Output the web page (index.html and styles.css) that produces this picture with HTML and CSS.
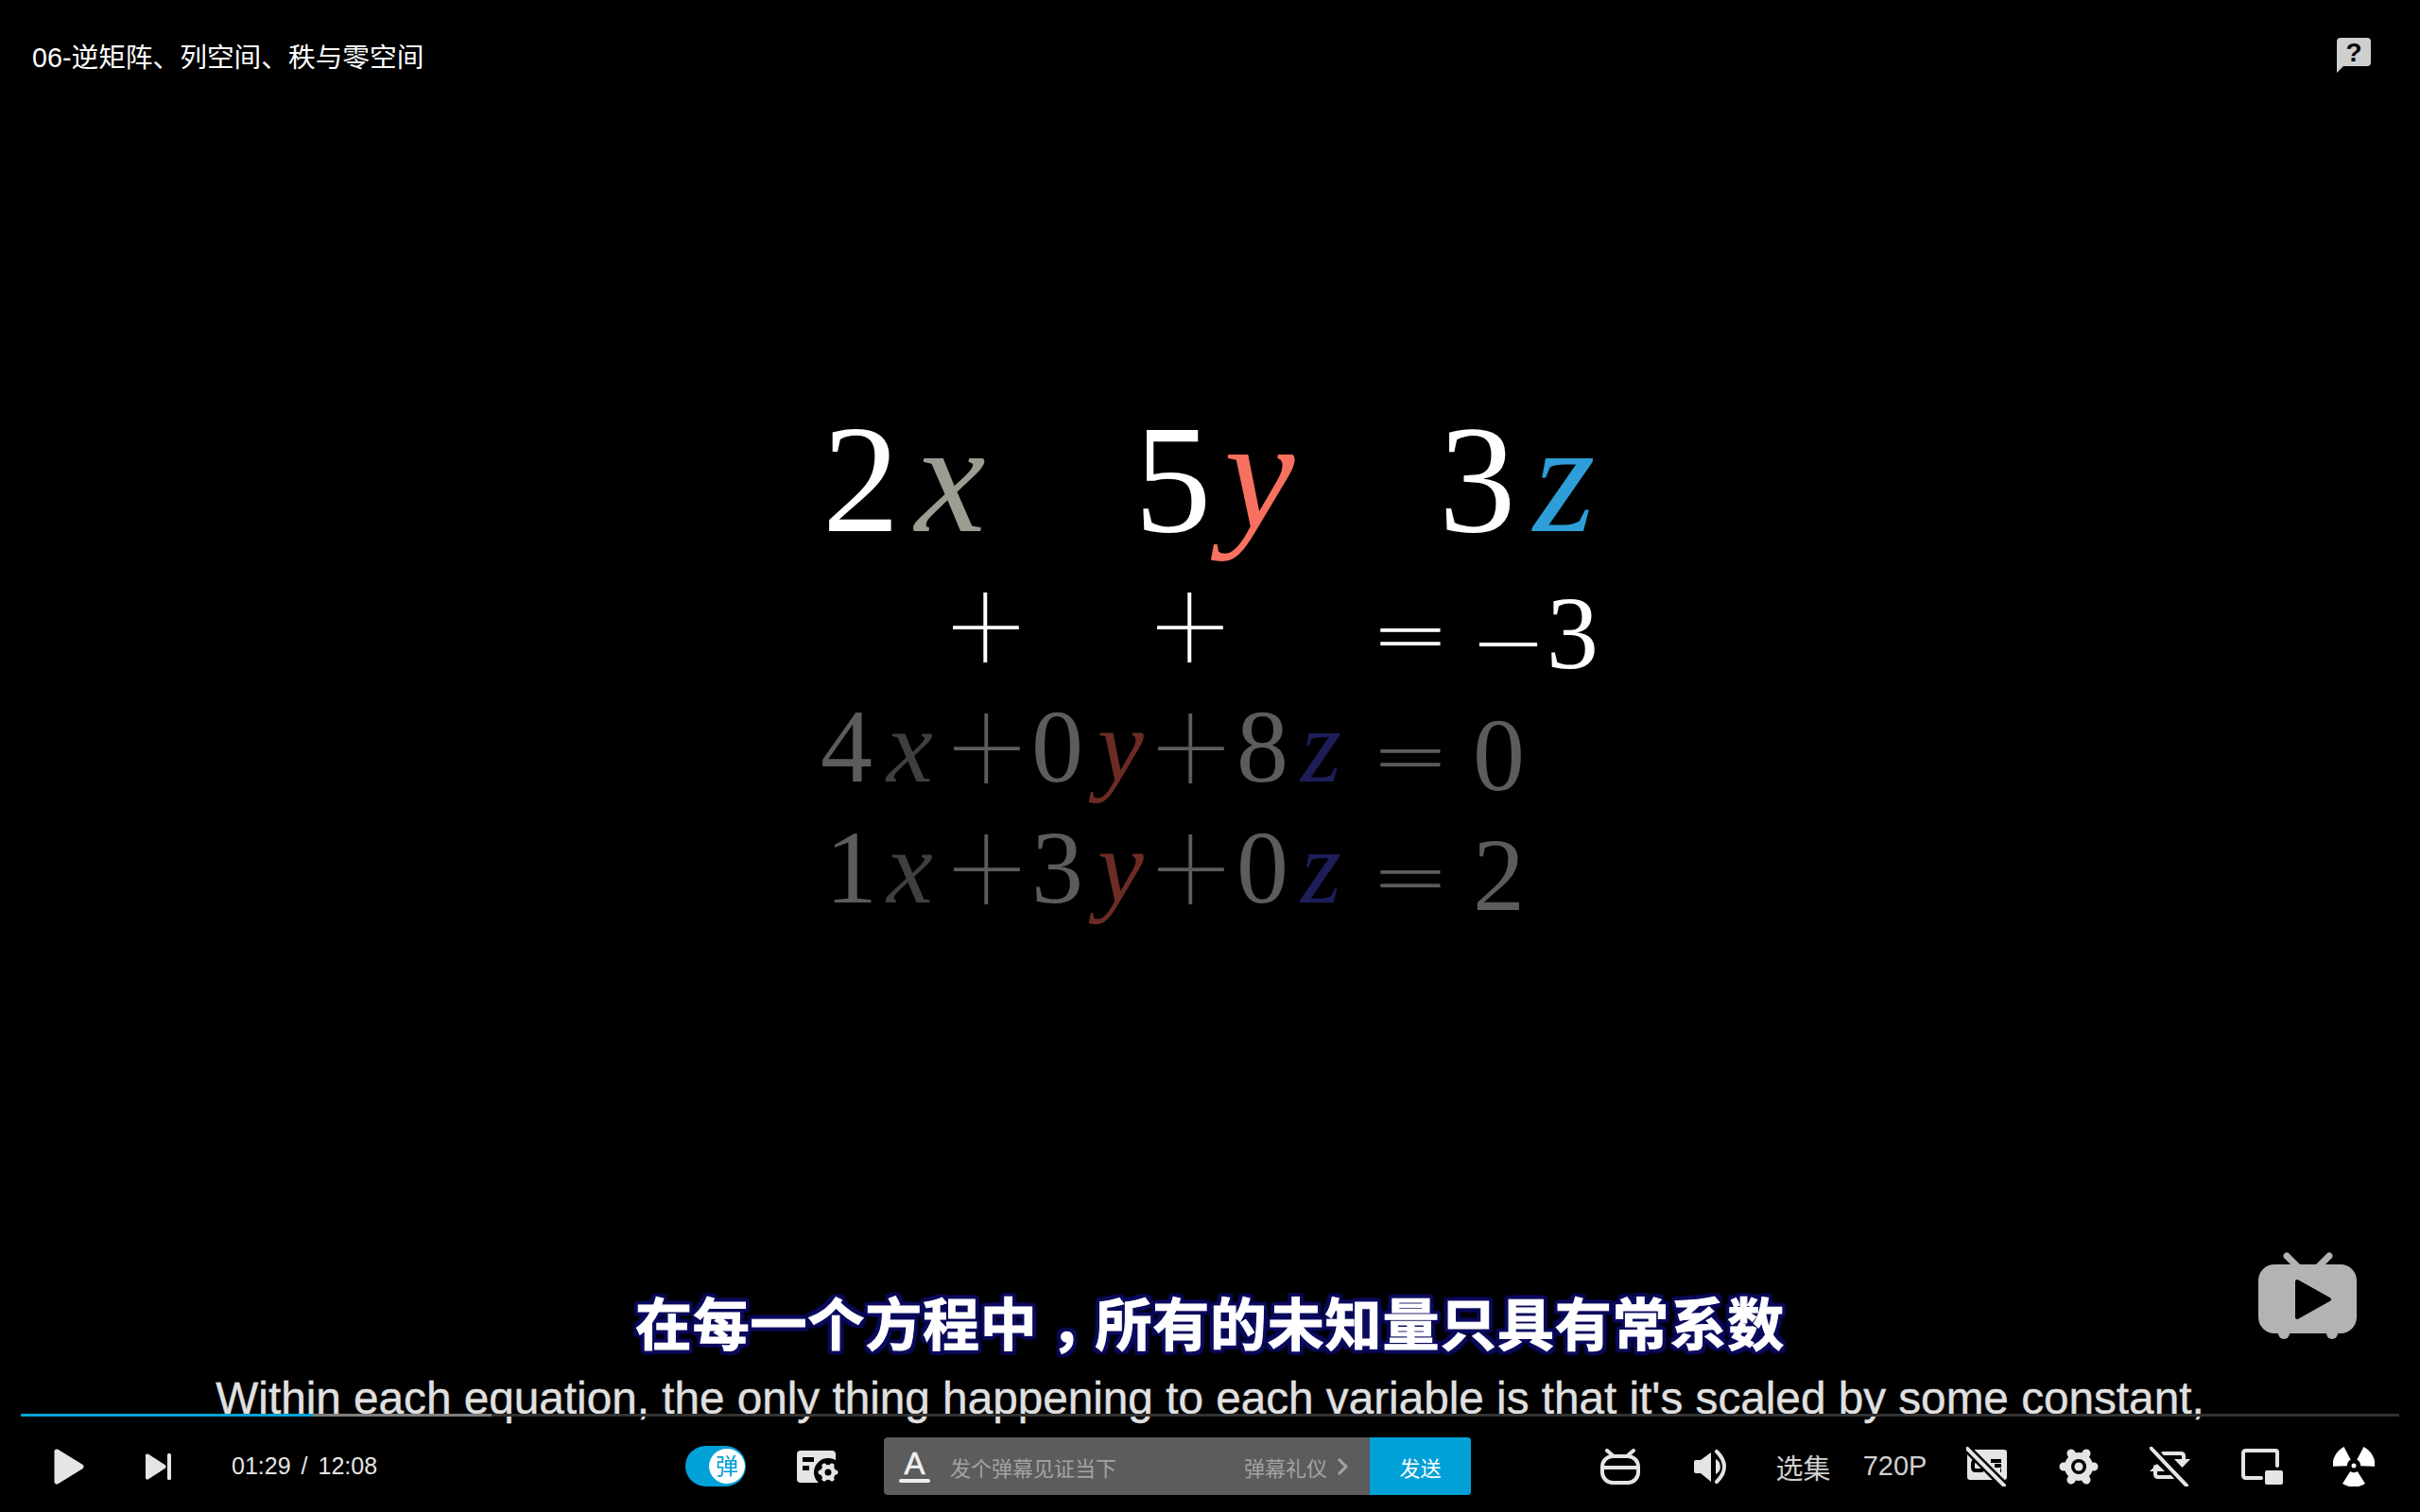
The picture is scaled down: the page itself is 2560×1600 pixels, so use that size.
FILE: index.html
```html
<!DOCTYPE html>
<html lang="zh-CN">
<head>
    <meta charset="UTF-8">
    <meta name="viewport" content="width=device-width, initial-scale=1.0">
    <title>06-逆矩阵、列空间、秩与零空间</title>
    <link rel="stylesheet" href="styles.css">
</head>
<body>
    <div class="player">
        <div class="video">
            <!-- the video frame: glyph places are the picture itself -->
            <svg class="frame" viewBox="0 0 2560 1600" width="2560" height="1600">
                <g class="row-top">
                    <text class="num" x="870" y="562">2</text>
                    <text class="var c-x" x="968" y="562">x</text>
                    <text class="num" x="1200" y="562">5</text>
                    <text class="var c-y" x="1295" y="558">y</text>
                    <text class="num" x="1522" y="562">3</text>
                    <text class="var c-z" x="1622" y="562">z</text>
                    <text class="op" x="1003" y="711">+</text>
                    <text class="op" x="1219" y="711">+</text>
                    <text class="op-eq" transform="translate(1449 698) scale(1 .47)">=</text>
                    <text class="op op-minus" x="1553" y="737">−</text>
                    <text class="num-small" x="1636" y="707">3</text>
                </g>
                <g class="row-dim">
                    <text class="num-small" x="868" y="827">4</text>
                    <text class="var-small c-x-dim" x="938" y="827">x</text>
                    <text class="op-small" x="1004" y="839">+</text>
                    <text class="num-small" x="1091" y="827">0</text>
                    <text class="var-small c-y-dim" x="1161" y="827">y</text>
                    <text class="op-small" x="1220" y="839">+</text>
                    <text class="num-small" x="1308" y="827">8</text>
                    <text class="var-small c-z-dim" x="1376" y="827">z</text>
                    <text class="op-eq-small" transform="translate(1449 826) scale(1 .47)">=</text>
                    <text class="num-small" x="1558" y="836">0</text>

                    <text class="num-small" x="873" y="955">1</text>
                    <text class="var-small c-x-dim" x="938" y="955">x</text>
                    <text class="op-small" x="1004" y="967">+</text>
                    <text class="num-small" x="1091" y="955">3</text>
                    <text class="var-small c-y-dim" x="1161" y="955">y</text>
                    <text class="op-small" x="1220" y="967">+</text>
                    <text class="num-small" x="1308" y="955">0</text>
                    <text class="var-small c-z-dim" x="1376" y="955">z</text>
                    <text class="op-eq-small" transform="translate(1449 954) scale(1 .47)">=</text>
                    <text class="num-small" x="1558" y="963">2</text>
                </g>
            </svg>

            <div class="top-bar">
                <span class="video-title">06-逆矩阵、列空间、秩与零空间</span>
                <svg class="help-icon" viewBox="0 0 36 37" width="36" height="37">
                    <path class="icon-help" d="M4 0H32Q36 0 36 4V26Q36 30 32 30H7L0 37V4Q0 0 4 0Z"/>
                    <text class="help-mark" x="18" y="25">?</text>
                </svg>
            </div>

            <svg class="tv-icon" viewBox="0 0 104 95" width="104" height="95">
                <path class="tv-antenna" d="M30 6L41 17M75 6L64 17"/>
                <circle class="tv-body" cx="27" cy="88" r="6"/>
                <circle class="tv-body" cx="78" cy="88" r="6"/>
                <rect class="tv-body" x="0" y="15" width="104" height="73" rx="17"/>
                <path class="tv-play" d="M41 33L75 52L41 71Z"/>
            </svg>

            <div class="subtitles">
                <div class="sub-zh">在每一个方程中<span class="sub-comma">，</span>所有的未知量只具有常系数</div>
                <div class="sub-en">Within each equation, the only thing happening to each variable is that it's scaled by some constant,</div>
            </div>
        </div>

        <div class="progress">
            <div class="progress-buffer" style="width: 19.8%"></div>
            <div class="progress-played" style="width: 12.28%"></div>
        </div>

        <div class="controls">
            <div class="controls-left">
                <svg viewBox="0 0 32 38" width="32" height="38">
                    <path class="icon-solid" d="M3 3L29 19L3 35Z"/>
                </svg>
                <svg viewBox="0 0 27 28" width="27" height="28">
                    <path class="icon-solid" d="M2 3L19 14L2 25Z"/>
                    <rect class="icon-fill" x="23" y="0" width="4" height="28" rx="1.5"/>
                </svg>
                <div class="time"><span>01:29</span><span>/</span><span>12:08</span></div>
            </div>

            <div class="controls-mid">
                <div class="danmaku-toggle"><span class="toggle-knob">弹</span></div>
                <svg class="danmaku-settings" viewBox="0 0 44 34" width="44" height="34">
                    <rect class="icon-fill" x="0" y="0" width="41" height="34" rx="4"/>
                    <rect class="icon-cut" x="6" y="7" width="12" height="5"/>
                    <rect class="icon-cut" x="6" y="16" width="7" height="5"/>
                    <circle class="icon-cut" cx="33" cy="23" r="15"/>
                    <g transform="translate(33 23)">
                        <path class="gear-lobe" d="M-8 0H8M-4 -7L4 7M4 -7L-4 7"/>
                        <circle class="icon-fill" r="8"/>
                        <circle class="icon-cut" r="3.5"/>
                    </g>
                </svg>
                <div class="danmaku-input">
                    <div class="font-button"><span class="font-letter">A</span><span class="font-line"></span></div>
                    <span class="danmaku-placeholder">发个弹幕见证当下</span>
                    <span class="danmaku-etiquette">弹幕礼仪</span>
                    <svg class="chevron" viewBox="0 0 12 18" width="12" height="18">
                        <path d="M2 1L10 9L2 17"/>
                    </svg>
                    <button class="send-button">发送</button>
                </div>
            </div>

            <div class="controls-right">
                <div class="ctl-item">
                    <svg viewBox="0 0 42 38" width="42" height="38">
                        <rect class="icon-line" x="2" y="8" width="38" height="28" rx="11"/>
                        <path class="icon-line" d="M2 20H40M7 2L14 8M35 2L28 8"/>
                    </svg>
                </div>
                <div class="ctl-item">
                    <svg viewBox="0 0 38 36" width="38" height="36">
                        <path class="icon-fill" d="M2 11H7L18 3V34L7 25H2Q0 25 0 23V13Q0 11 2 11Z"/>
                        <path class="icon-fill" d="M23 10A9 9 0 0 1 23 26Z"/>
                        <path class="icon-line" d="M24 2Q40 18 24 34"/>
                    </svg>
                </div>
                <div class="ctl-item ctl-text">选集</div>
                <div class="ctl-item ctl-text">720P</div>
                <div class="ctl-item">
                    <svg viewBox="0 0 44 42" width="44" height="42">
                        <rect class="icon-fill" x="1" y="3" width="42" height="32" rx="3"/>
                        <path class="icon-mark" d="M15 15H10Q7 15 7 18V22Q7 25 10 25H18M26 15H37M30 20H37M36 25H37"/>
                        <path class="slash-cut" d="M1 2L40 41"/>
                        <path class="slash" d="M1 2L40 41"/>
                    </svg>
                </div>
                <div class="ctl-item">
                    <svg viewBox="-21 -20 42 40" width="42" height="40">
                        <path class="gear-big" d="M-16 0H16M-8 -14L8 14M8 -14L-8 14"/>
                        <circle class="icon-fill" r="15"/>
                        <circle class="icon-cut" r="8"/>
                        <circle class="icon-fill" r="4.5"/>
                    </svg>
                </div>
                <div class="ctl-item">
                    <svg viewBox="0 0 44 42" width="44" height="42">
                        <path class="icon-line" d="M14 7H33Q36 7 36 10V14M6 21V29Q6 32 9 32H30"/>
                        <path class="icon-fill" d="M26 13H43L34.5 22ZM0 26H16L8 18Z"/>
                        <path class="slash-cut" d="M1 1L39 41"/>
                        <path class="slash" d="M1 1L39 41"/>
                    </svg>
                </div>
                <div class="ctl-item">
                    <svg viewBox="0 0 44 38" width="44" height="38">
                        <path class="icon-line" d="M38 18V4Q38 2 36 2H5Q2 2 2 5V28Q2 31 5 31H21"/>
                        <rect class="icon-fill" x="25" y="23" width="19" height="15" rx="2"/>
                    </svg>
                </div>
                <div class="ctl-item">
                    <svg viewBox="-22 -20 44 42" width="44" height="42">
                        <path class="icon-white" d="M-3.8 6L-12 19A22 22 0 0 0 12 19L3.8 6A7 7 0 0 1 -3.8 6Z"/>
                        <path class="icon-white" transform="rotate(120)" d="M-3.8 6L-12 19A22 22 0 0 0 12 19L3.8 6A7 7 0 0 1 -3.8 6Z"/>
                        <path class="icon-white" transform="rotate(240)" d="M-3.8 6L-12 19A22 22 0 0 0 12 19L3.8 6A7 7 0 0 1 -3.8 6Z"/>
                        <circle class="icon-white" r="2.5"/>
                    </svg>
                </div>
            </div>
        </div>
    </div>
</body>
</html>
```

FILE: styles.css
```css
body {
    margin: 0;
    background-color: #000;
    font-family: "Liberation Sans", "Noto Sans CJK SC", sans-serif;
}
.player {
    width: 2560px;
    height: 1600px;
    display: flex;
    flex-direction: column;
    overflow: hidden;
}

/* video area */
.video {
    flex: 1;
    position: relative;
    display: flex;
    flex-direction: column;
    justify-content: flex-end;
    align-items: center;
}
.frame {
    position: absolute;
    top: 0;
    left: 0;
}
.num, .num-small, .var, .var-small {
    font-family: "Liberation Serif", serif;
}
.num { font-size: 163px; fill: #fff; }
.num-small { font-size: 110px; fill: #5c5c5c; }
.row-top .num-small { fill: #fff; }
.var { font-size: 168px; font-style: italic; }
.var-small { font-size: 110px; font-style: italic; }
.op, .op-small, .op-eq, .op-eq-small {
    font-family: Roboto, sans-serif;
    font-weight: 100;
}
.op { font-size: 143px; fill: #fff; }
.op-minus { font-size: 150px; }
.op-small { font-size: 143px; fill: #5c5c5c; }
.op-eq, .op-eq-small {
    font-size: 155px;
    font-weight: 300;
}
.op-eq { fill: #fff; }
.op-eq-small { fill: #5c5c5c; }
.c-x { fill: #9a9e92; }
.c-y { fill: #f8705f; }
.c-z { fill: #2e9ed8; }
.c-x-dim { fill: #3f3f3f; }
.c-y-dim { fill: #6b2c24; }
.c-z-dim { fill: #1d1d58; }

.top-bar {
    position: absolute;
    top: 40px;
    left: 34px;
    right: 52px;
    display: flex;
    justify-content: space-between;
    align-items: flex-start;
}
.video-title {
    font-size: 28.7px;
    line-height: 42px;
    color: #fff;
}
.help-icon { display: block; }
.icon-help { fill: #cfcfcf; }
.help-mark {
    font-size: 28px;
    font-weight: 700;
    text-anchor: middle;
    fill: #000;
}

.tv-icon {
    position: absolute;
    right: 67px;
    top: 1323px;
}
.tv-body { fill: #b3b3b3; }
.tv-antenna {
    fill: none;
    stroke: #b3b3b3;
    stroke-width: 7;
    stroke-linecap: round;
}
.tv-play {
    fill: #000;
    stroke: #000;
    stroke-width: 4;
    stroke-linejoin: round;
}

.subtitles {
    position: relative;
    display: flex;
    flex-direction: column;
    align-items: center;
    margin-bottom: -10px;
}
.sub-zh {
    font-size: 60px;
    font-weight: 700;
    line-height: 70px;
    letter-spacing: .8px;
    color: #fff;
    -webkit-text-stroke: 1px #fff;
    text-shadow: 4px 0 2px #0b0b5e, -4px 0 2px #0b0b5e, 0 4px 2px #0b0b5e, 0 -4px 2px #0b0b5e,
        4px 4px 2px #0b0b5e, -4px 4px 2px #0b0b5e, 4px -4px 2px #0b0b5e, -4px -4px 2px #0b0b5e;
}
.sub-comma {
    display: inline-block;
    padding-left: 14px;
    margin-right: -14px;
}
.sub-en {
    margin-top: 15px;
    font-size: 47.7px;
    line-height: 52px;
    color: #e0e0e0;
    -webkit-text-stroke: .4px #e0e0e0;
    white-space: nowrap;
}

/* progress bar */
.progress {
    position: relative;
    height: 3px;
    margin: 0 22px;
    background-color: #333;
}
.progress-played, .progress-buffer {
    position: absolute;
    top: 0;
    left: 0;
    height: 100%;
}
.progress-played { background-color: #00a1d6; }
.progress-buffer { background-color: #7f7f7f; }

/* controls */
.controls {
    height: 97px;
    padding: 4px 22px 0 57px;
    display: flex;
    align-items: center;
}
.controls svg { display: block; }
.icon-fill { fill: #e5e5e5; }
.icon-white { fill: #fff; }
.icon-cut { fill: #000; }
.icon-solid {
    fill: #e5e5e5;
    stroke: #e5e5e5;
    stroke-width: 5;
    stroke-linejoin: round;
}
.icon-line {
    fill: none;
    stroke: #e5e5e5;
    stroke-width: 4;
    stroke-linecap: round;
}
.icon-mark {
    fill: none;
    stroke: #000;
    stroke-width: 4;
}
.slash-cut {
    fill: none;
    stroke: #000;
    stroke-width: 9;
}
.slash {
    fill: none;
    stroke: #e5e5e5;
    stroke-width: 4;
    stroke-linecap: round;
}
.gear-lobe {
    stroke: #e5e5e5;
    stroke-width: 5;
    stroke-linecap: round;
}
.gear-big {
    stroke: #e5e5e5;
    stroke-width: 9;
    stroke-linecap: round;
}

.controls-left {
    display: flex;
    align-items: center;
    gap: 65px;
}
.time {
    margin-left: -1px;
    display: flex;
    gap: 11px;
    font-size: 25px;
    color: #e5e5e5;
}

.controls-mid {
    margin-left: 326px;
    display: flex;
    align-items: center;
}
.danmaku-toggle {
    width: 64px;
    height: 43px;
    border-radius: 22px;
    background-color: #00a1d6;
    display: flex;
    align-items: center;
    justify-content: flex-end;
}
.toggle-knob {
    width: 38px;
    height: 37px;
    margin-right: 1px;
    border-radius: 50%;
    background-color: #fff;
    color: #00a1d6;
    font-size: 24px;
    line-height: 37px;
    text-align: center;
}
.danmaku-settings { margin-left: 54px; }
.danmaku-input {
    width: 621px;
    height: 61px;
    margin-left: 48px;
    border-radius: 4px;
    overflow: hidden;
    background-color: #5c5c5c;
    display: flex;
    align-items: center;
}
.font-button {
    width: 33px;
    margin-left: 16px;
    display: flex;
    flex-direction: column;
    align-items: center;
}
.font-letter {
    font-size: 33px;
    line-height: 28px;
    color: #f0f0f0;
    -webkit-text-stroke: .6px #f0f0f0;
}
.font-line {
    width: 33px;
    height: 4px;
    margin-top: 2px;
    border-radius: 2px;
    background-color: #f0f0f0;
}
.danmaku-placeholder {
    margin-left: 21px;
    font-size: 22px;
    color: #a3a3a3;
}
.danmaku-etiquette {
    margin-left: auto;
    font-size: 22px;
    color: #a3a3a3;
}
.chevron { margin: 0 23px 0 10px; }
.chevron path {
    fill: none;
    stroke: #a3a3a3;
    stroke-width: 3;
}
.send-button {
    width: 107px;
    height: 100%;
    border: 0;
    padding: 0;
    background-color: #00a1d6;
    color: #fff;
    font-family: inherit;
    font-size: 22px;
}

.controls-right {
    margin-left: auto;
    display: grid;
    grid-template-columns: repeat(9, 97px);
    align-items: center;
}
.ctl-item {
    display: flex;
    justify-content: center;
    align-items: center;
}
.ctl-text {
    font-size: 29px;
    color: #d0d0d0;
}
```
